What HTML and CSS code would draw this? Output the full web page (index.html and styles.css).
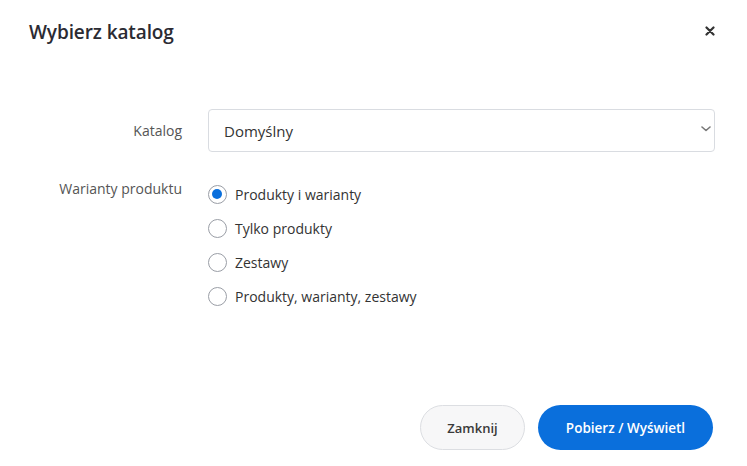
FILE: index.html
```html
<!DOCTYPE html>
<html lang="pl">
<head>
    <meta charset="UTF-8">
    <meta name="viewport" content="width=device-width, initial-scale=1.0">
    <title>Wybierz katalog</title>
    <link rel="stylesheet" href="styles.css">
</head>
<body>
    <div class="modal">
        <div class="modal-header">
            <h2>Wybierz katalog</h2>
            <button class="close-btn" aria-label="Zamknij">
                <svg width="10" height="10" viewBox="0 0 10 10">
                    <path d="M1.5 1.5 L8.5 8.5 M8.5 1.5 L1.5 8.5" stroke="#333" stroke-width="2.2" stroke-linecap="round"/>
                </svg>
            </button>
        </div>

        <div class="modal-body">
            <div class="form-row">
                <label class="form-label" for="catalog">Katalog</label>
                <div class="select-wrap">
                    <select id="catalog" class="select">
                        <option>Domyślny</option>
                    </select>
                    <svg class="chevron" width="10" height="6" viewBox="0 0 10 6">
                        <path d="M1 1 L5 4.5 L9 1" fill="none" stroke="#777" stroke-width="1.6" stroke-linecap="round" stroke-linejoin="round"/>
                    </svg>
                </div>
            </div>

            <div class="form-row variants">
                <span class="form-label">Warianty produktu</span>
                <div class="radio-list">
                    <label class="radio"><input type="radio" name="variant" checked><span class="dot"></span>Produkty i warianty</label>
                    <label class="radio"><input type="radio" name="variant"><span class="dot"></span>Tylko produkty</label>
                    <label class="radio"><input type="radio" name="variant"><span class="dot"></span>Zestawy</label>
                    <label class="radio"><input type="radio" name="variant"><span class="dot"></span>Produkty, warianty, zestawy</label>
                </div>
            </div>
        </div>

        <div class="modal-footer">
            <button class="btn btn-secondary">Zamknij</button>
            <button class="btn btn-primary">Pobierz / Wyświetl</button>
        </div>
    </div>
</body>
</html>
```

FILE: styles.css
```css
* { margin: 0; padding: 0; box-sizing: border-box; }
body {
    font-family: "Open Sans", "Noto Sans", sans-serif;
    background: #fff;
    color: #333;
    width: 747px;
    height: 466px;
    overflow: hidden;
}
.modal { display: flex; flex-direction: column; height: 466px; }
.modal-header {
    display: flex;
    justify-content: space-between;
    align-items: center;
    padding: 16px 32px 0 29px;
    height: 48px;
}
.modal-header h2 {
    font-size: 19px;
    font-weight: 600;
    color: #2b2b33;
    letter-spacing: -0.1px;
}
.close-btn {
    background: none;
    border: none;
    cursor: pointer;
    display: flex;
    margin-top: -2px;
}
.modal-body { padding: 61px 32px 0 0; }
.form-row { display: flex; align-items: center; }
.form-label {
    width: 208px;
    padding-right: 26px;
    text-align: right;
    font-size: 14px;
    color: #555;
}
.select-wrap { position: relative; flex: 1; }
.select {
    width: 100%;
    height: 43px;
    appearance: none;
    border: 1px solid #d9dce1;
    border-radius: 4px;
    background: #fff;
    padding: 0 15px;
    font-family: inherit;
    font-size: 15px;
    color: #333;
}
.chevron { position: absolute; right: 4px; top: 17px; }
.variants { align-items: flex-start; margin-top: 25px; }
.variants .form-label { padding-top: 2px; }
.radio-list { display: flex; flex-direction: column; gap: 12px; margin-top: 6px; }
.radio {
    display: flex;
    align-items: center;
    font-size: 14px;
    color: #333;
    height: 22px;
    cursor: pointer;
}
.radio input { display: none; }
.dot {
    width: 19px;
    height: 19px;
    border: 1.5px solid #9a9ea6;
    border-radius: 50%;
    margin-right: 8px;
    position: relative;
}
.radio input:checked + .dot::after {
    content: "";
    position: absolute;
    left: 3px; top: 3px;
    width: 10px; height: 10px;
    border-radius: 50%;
    background: #0a6fdc;
}
.modal-footer {
    display: flex;
    justify-content: flex-end;
    gap: 13px;
    margin-top: auto;
    padding: 0 34px 16px 0;
}
.btn {
    height: 45px;
    border-radius: 23px;
    font-family: inherit;
    font-size: 13.5px;
    font-weight: 600;
    cursor: pointer;
}
.btn-secondary {
    width: 105px;
    background: #f7f7f8;
    border: 1.5px solid #dcdee2;
    color: #3a3a3a;
    font-size: 13px;
}
.btn-primary {
    width: 175px;
    background: #0a6fdc;
    border: none;
    color: #fff;
}
```
